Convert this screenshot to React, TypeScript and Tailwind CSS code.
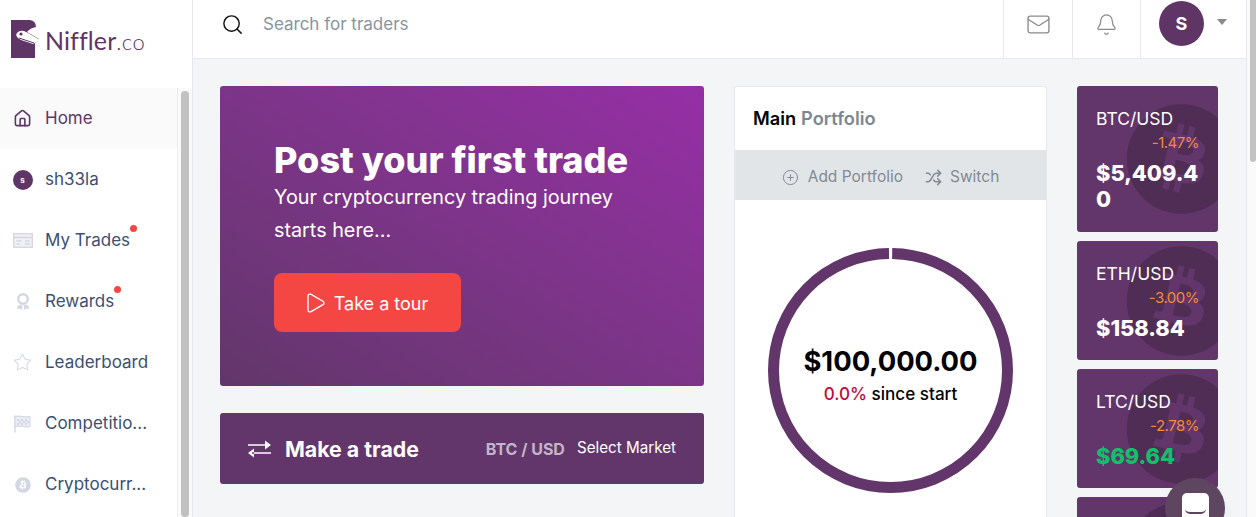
import { Bell, CirclePlus, Home, Mail, Play, Search, Shuffle, Star } from 'lucide-react';
import { FaBitcoin } from 'react-icons/fa';

const NavIcon = ({ name }: { name: string }) => {
    if (name === 'Home') return <Home size={19} strokeWidth={2} className="text-[#5f3566]" />;
    if (name === 'sh33la') {
        return (
            <div className="w-5 h-5 rounded-full bg-[#5f3566] text-white text-[8px] font-bold flex items-center justify-center">s</div>
        );
    }
    if (name === 'My Trades') {
        return (
            <svg width="20" height="15" viewBox="0 0 20 15" fill="none" stroke="#d3d7e3" strokeWidth="1.3">
                <rect x="0.7" y="0.7" width="18.6" height="13.6" fill="#f0f1f6" />
                <path d="M1 4.5h18M3.5 8h5M12 8h4.5M3.5 11h3M12 11h4.5" />
            </svg>
        );
    }
    if (name === 'Rewards') {
        return (
            <svg width="14" height="18" viewBox="0 0 14 18" fill="none">
                <circle cx="7" cy="6" r="4.8" stroke="#d3d7e3" strokeWidth="2.4" />
                <path d="M1.5 13l3-1.5 2 1.5-1 4-2-1.5-2.5.5zM12.5 13l-3-1.5-2 1.5 1 4 2-1.5 2.5.5z" fill="#d3d7e3" />
            </svg>
        );
    }
    if (name === 'Leaderboard') return <Star size={19} strokeWidth={1.3} className="text-[#d3d7e3]" />;
    if (name === 'Competitio...') {
        return (
            <svg width="17" height="19" viewBox="0 0 17 19" fill="none">
                <path d="M1 1.5v17" stroke="#d3d7e3" strokeWidth="1.4" />
                <path d="M1 2.5c5-1.5 10 1.5 15 0v10c-5 1.5-10-1.5-15 0z" fill="#eceef4" stroke="#d3d7e3" strokeWidth="1.1" />
                <path d="M3 5h2v2H3zM7 5h2v2H7zM11 5h2v2h-2zM5 7h2v2H5zM9 7h2v2H9zM13 7h2v2h-2zM3 9h2v2H3zM7 9h2v2H7zM11 9h2v2h-2z" fill="#d3d7e3" />
            </svg>
        );
    }
    return <FaBitcoin size={16} className="text-[#d3d7e3]" />;
};

const navItems = [
    { name: 'Home', active: true },
    { name: 'sh33la' },
    { name: 'My Trades', dot: true },
    { name: 'Rewards', dot: true },
    { name: 'Leaderboard' },
    { name: 'Competitio...' },
    { name: 'Cryptocurr...' },
];

const tickers = [
    { pair: 'BTC/USD', change: '-1.47%', price: '$5,409.40', h: 'h-[146px]' },
    { pair: 'ETH/USD', change: '-3.00%', price: '$158.84', h: 'h-[119px]' },
    { pair: 'LTC/USD', change: '-2.78%', price: '$69.64', h: 'h-[119px]', green: true },
];

const TickerCoin = () => (
    <FaBitcoin size={113} className="absolute left-[48px] top-1/2 -translate-y-1/2 text-[#4f2d55]" />
);

export default function App() {
    return (
        <div className="relative flex h-screen overflow-hidden bg-white font-['Inter',sans-serif]">
            {/* Sidebar */}
            <aside className="w-[193px] shrink-0 border-r border-[#e6e8ee] flex flex-col">
                <div className="h-[88px] pl-[11px] pt-[20px] flex items-start">
                    <svg width="30" height="38" viewBox="0 0 30 38" className="shrink-0">
                        <path d="M0 0H19Q25 1 25 7Q19 8 16 12L28 19V20L24 23V38H0Z" fill="#5f3566" />
                        <path d="M5 15Q7 10 13 11L17 13L29 20L22 24L10 20Q6 18 5 15Z" fill="#fff" />
                        <circle cx="10" cy="14" r="1.6" fill="#5f3566" />
                        <path d="M8 18L23 23" stroke="#5f3566" strokeWidth="1" />
                    </svg>
                    <span className="ml-[4px] text-[25px] leading-[40px] text-[#5f3566] font-['Lato',sans-serif] tracking-[0.1px]">
                        Niffler<span className="font-light text-[22px] tracking-[0.4px]">.co</span>
                    </span>
                </div>
                <div className="flex flex-1 min-h-0">
                    <nav className="w-[177px] shrink-0">
                        {navItems.map((item) => (
                            <div
                                key={item.name}
                                className={`h-[61px] flex items-center ${item.active ? 'bg-[#fafafa] text-[#5f3566]' : 'text-[#3c4f72]'}`}
                            >
                                <div className="w-[45px] flex justify-center">
                                    <NavIcon name={item.name} />
                                </div>
                                <span className="relative text-[17px]">
                                    {item.name}
                                    {item.dot && <span className="absolute -top-[3px] -right-[7px] w-[7px] h-[7px] rounded-full bg-[#f44642]" />}
                                </span>
                            </div>
                        ))}
                    </nav>
                    <div className="w-[15px] border-l border-[#eeeeee] bg-[#fafafa] pl-[3px] pt-[3px]">
                        <div className="w-[8px] h-full rounded-full bg-[#c1c1c1]" />
                    </div>
                </div>
            </aside>

            <div className="flex-1 min-w-0 flex flex-col">
                {/* Top bar */}
                <header className="h-[59px] shrink-0 border-b border-[#e6e8ee] flex items-stretch">
                    <div className="flex-1 flex items-center pl-[28px] pb-[9px]">
                        <Search size={23} strokeWidth={1.5} className="text-[#111]" />
                        <span className="ml-[19px] text-[17px] text-[#8a93a0]">Search for traders</span>
                    </div>
                    <div className="w-[69px] border-l border-[#e6e8ee] flex items-center justify-center pb-[10px]">
                        <Mail size={25} strokeWidth={1.3} className="text-[#8a8a8a]" />
                    </div>
                    <div className="w-[68px] border-l border-[#e6e8ee] flex items-center justify-center pb-[10px]">
                        <Bell size={23} strokeWidth={1.3} className="text-[#8a8a8a]" />
                    </div>
                    <div className="w-[106px] border-l border-[#e6e8ee] flex items-start pl-[18px] pt-[1px]">
                        <div className="w-[45px] h-[45px] rounded-full bg-[#5f3566] text-white font-bold text-[18px] flex items-center justify-center">S</div>
                        <div className="ml-[13px] mt-[18px] w-0 h-0 border-x-[5px] border-x-transparent border-t-[6px] border-t-[#8a8a8a]" />
                    </div>
                </header>

                {/* Main */}
                <main className="flex-1 min-h-0 overflow-hidden bg-[#f4f5f7] pl-[27px] pt-[27px] flex items-start">
                    <div className="w-[484px] shrink-0">
                        <div className="h-[300px] rounded-[3px] bg-gradient-to-tr from-[#62366a] to-[#962ea6] pl-[54px] pt-[54px] text-white">
                            <h1 className="text-[36px] leading-[40px] font-extrabold">Post your first trade</h1>
                            <p className="mt-[1px] w-[380px] text-[19.8px] leading-[33px]">Your cryptocurrency trading journey starts here...</p>
                            <button className="mt-[26px] w-[187px] h-[59px] rounded-[8px] bg-[#f44642] flex items-center justify-center gap-[7px] text-[18px] pt-[1px] pr-[4px]">
                                <Play size={24} strokeWidth={1.4} />
                                Take a tour
                            </button>
                        </div>
                        <div className="mt-[27px] h-[71px] rounded-[3px] bg-[#62366a] text-white flex items-center pl-[28px] pr-[28px]">
                            <svg width="23" height="18" viewBox="0 0 23 18" fill="#fff" className="shrink-0">
                                <path d="M0 4.2H19V5.8H0zM17 0.5L23 5L17 9.5zM4 12.2H23V13.8H4zM6 8.5L0 13L6 17.5z" />
                            </svg>
                            <span className="ml-[14px] pt-[2px] text-[21.3px] font-bold">Make a trade</span>
                            <span className="ml-auto text-[16px] font-bold text-[#c5b4c9]">BTC / USD</span>
                            <span className="ml-[12px] text-[15.2px]">Select Market</span>
                        </div>
                    </div>

                    <div className="ml-[30px] w-[313px] shrink-0 h-[480px] rounded-t-[3px] bg-white border border-[#e6e8ee] border-b-0">
                        <div className="h-[63px] flex items-center pl-[18px] text-[18.2px] font-semibold">
                            <span className="text-black">Main</span>
                            <span className="ml-[5px] text-[#7c8792]">Portfolio</span>
                        </div>
                        <div className="h-[50px] pt-[4px] bg-[#e2e5e8] text-[#838a91] text-[15.5px] flex items-center justify-center">
                            <CirclePlus size={17} strokeWidth={1.4} />
                            <span className="ml-[9px]">Add Portfolio</span>
                            <Shuffle size={17} strokeWidth={2.2} className="ml-[22px]" />
                            <span className="ml-[8px]">Switch</span>
                        </div>
                        <div className="relative mt-[48px] mx-auto w-[245px] h-[245px]">
                            <svg width="245" height="245" viewBox="0 0 245 245">
                                <circle cx="122.5" cy="122.5" r="117" fill="none" stroke="#62366a" strokeWidth="11" strokeDasharray="731.6 3.5" strokeDashoffset="-1.7" transform="rotate(-90 122.5 122.5)" />
                            </svg>
                            <div className="absolute inset-0 flex flex-col items-center justify-center pt-[12px]">
                                <div className="text-[27.4px] leading-[34px] font-bold text-black">$100,000.00</div>
                                <div className="text-[17.1px] leading-[32px] font-medium text-black">
                                    <span className="text-[#c20a3c]">0.0%</span> since start
                                </div>
                            </div>
                        </div>
                    </div>

                    <div className="ml-[30px] w-[141px] shrink-0 flex flex-col gap-[9px]">
                        {tickers.map((t) => (
                            <div key={t.pair} className={`relative shrink-0 overflow-hidden rounded-[3px] bg-[#62366a] pl-[19px] pr-[19px] pt-[21px] text-white ${t.h}`}>
                                <TickerCoin />
                                <div className="relative text-[17.5px] leading-[24px]">{t.pair}</div>
                                <div className="relative text-right text-[15px] leading-[24px] text-[#f28c38] tracking-[-0.5px]">{t.change}</div>
                                <div className={`relative mt-[5px] -mr-[6px] text-[21.8px] leading-[26px] font-extrabold break-all ${t.green ? 'text-[#12c06a]' : 'text-white'}`}>{t.price}</div>
                            </div>
                        ))}
                        <div className="relative shrink-0 overflow-hidden rounded-[3px] bg-[#62366a] h-[119px]">
                            <TickerCoin />
                        </div>
                    </div>
                </main>
            </div>

            {/* Page scrollbar */}
            <div className="w-[10px] shrink-0 border-l border-[#e6e8ee] bg-[#fafafa] pl-[3px]">
                <div className="w-[6px] h-[162px] rounded-b-[3px] bg-[#c1c1c1]" />
            </div>

            {/* Chat bubble */}
            <div className="absolute left-[1165px] top-[478px] w-[60px] h-[60px] rounded-full bg-[#5f4660] shadow-lg flex justify-center pt-[15px]">
                <div className="w-[27px] h-[30px] rounded-[5px] bg-white flex justify-center">
                    <div className="mt-[16px] w-[21px] h-[5px] border-b-2 border-[#5f4660] rounded-b-full" />
                </div>
            </div>
        </div>
    );
}
